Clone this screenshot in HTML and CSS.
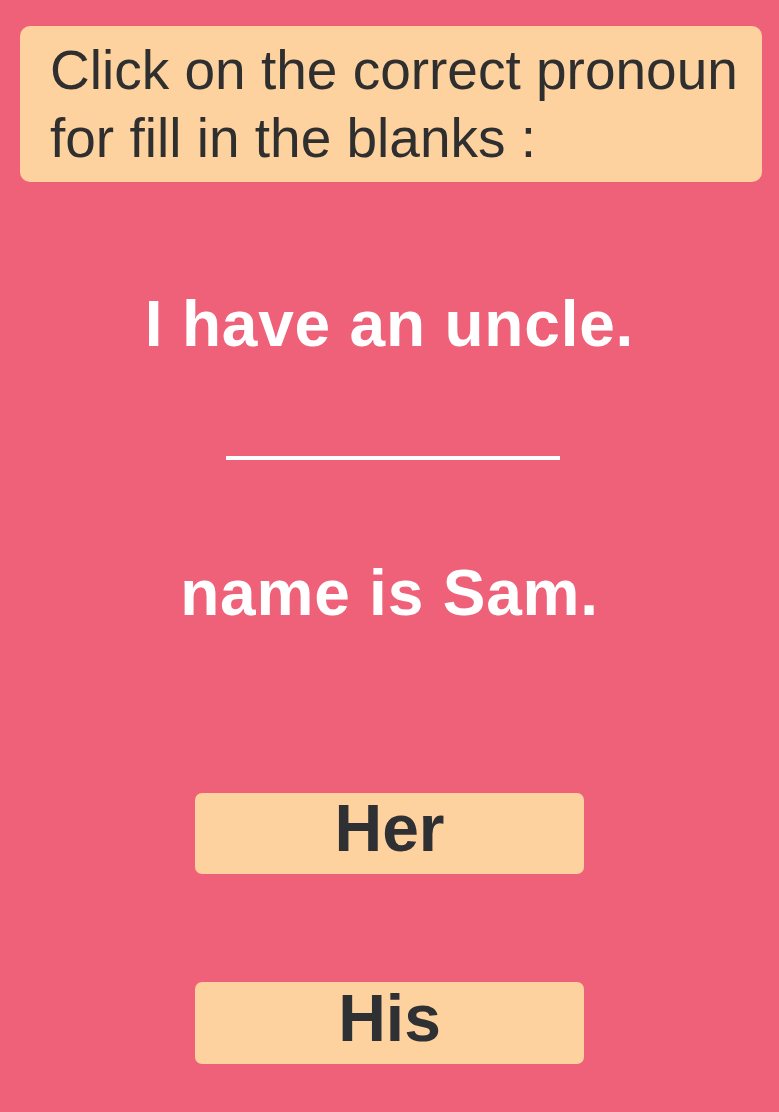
FILE: index.html
```html
<!DOCTYPE html>
<html lang="en">
<head>
<meta charset="utf-8">
<title>Pronoun quiz</title>
<link rel="stylesheet" href="styles.css">
</head>
<body>
<main class="quiz">
  <header class="prompt">
    <p class="prompt-text">Click on the correct pronoun<br>for fill in the blanks :</p>
  </header>
  <section class="sentence">
    <p class="line line-first">I have an uncle.</p>
    <div class="blank"></div>
    <p class="line line-second">name is Sam.</p>
  </section>
  <div class="options">
    <button class="option option-first" type="button">Her</button>
    <button class="option option-second" type="button">His</button>
  </div>
</main>
</body>
</html>
```

FILE: styles.css
```css
html, body {
  margin: 0;
  padding: 0;
}
body {
  background: #ef6179;
  font-family: "Liberation Sans", Arial, sans-serif;
  width: 779px;
  height: 1112px;
  overflow: hidden;
}
.quiz {
  display: flex;
  flex-direction: column;
  align-items: center;
  padding-top: 26px;
}
.prompt {
  align-self: flex-start;
  margin-left: 20px;
  width: 742px;
  height: 156px;
  box-sizing: border-box;
  padding: 10px 0 0 30px;
  background: #fdd29f;
  border-radius: 10px;
}
.prompt-text {
  margin: 0;
  font-size: 55px;
  line-height: 68px;
  color: #2f2f30;
}
.sentence {
  display: flex;
  flex-direction: column;
  align-items: center;
  margin-top: 105px;
}
.line {
  margin: 0;
  color: #ffffff;
  font-weight: bold;
  font-size: 64px;
  line-height: 74px;
  letter-spacing: 0.8px;
}
.blank {
  width: 334px;
  height: 4px;
  background: #ffffff;
  margin-top: 95px;
  margin-left: 7px;
}
.line-second {
  margin-top: 96px;
}
.options {
  display: flex;
  flex-direction: column;
  align-items: center;
  gap: 108px;
  margin-top: 163px;
}
.option {
  width: 389px;
  height: 81px;
  box-sizing: border-box;
  padding: 0 0 10px;
  border: none;
  border-radius: 7px;
  background: #fdd29f;
  color: #2f3033;
  font-family: "Liberation Sans", Arial, sans-serif;
  font-weight: bold;
  font-size: 66px;
  line-height: 71px;
  text-align: center;
}
.option-second {
  height: 82px;
}
```
